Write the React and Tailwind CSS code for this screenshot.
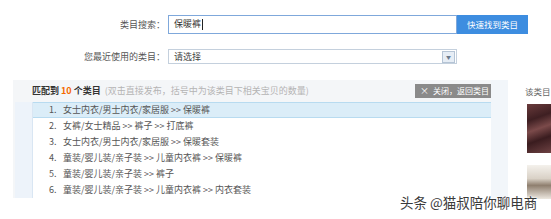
const rows = [
  '女士内衣/男士内衣/家居服 >> 保暖裤',
  '女裤/女士精品 >> 裤子 >> 打底裤',
  '女士内衣/男士内衣/家居服 >> 保暖套装',
  '童装/婴儿装/亲子装 >> 儿童内衣裤 >> 保暖裤',
  '童装/婴儿装/亲子装 >> 裤子',
  '童装/婴儿装/亲子装 >> 儿童内衣裤 >> 内衣套装',
];

const App = () => {
  return (
    <div
      className="relative w-[551px] h-[219px] overflow-hidden bg-white text-[#555]"
      style={{ fontFamily: '"Noto Sans CJK SC", "Noto Sans", sans-serif' }}
    >
      {/* Search form */}
      <div className="pt-[14px]">
        <div className="flex items-center h-[20px]">
          <div className="w-[165px] text-right text-[9px] leading-none text-[#555]">类目搜索：</div>
          <div className="ml-[3px] w-[289px] h-[19px] border border-[#7fa8db] flex items-center px-[5px] text-[9px] text-[#333]">
            保暖裤<span className="ml-[1px] w-px h-[11px] bg-[#222]" />
          </div>
          <button className="w-[71px] h-[19px] bg-[#3d8de0] text-white text-[8.5px] flex items-center justify-center">
            快速找到类目
          </button>
        </div>

        <div className="flex items-center h-[15px] mt-[15px]">
          <div className="w-[165px] text-right text-[9px] leading-none text-[#555]">您最近使用的类目：</div>
          <div className="ml-[3px] w-[289px] h-[15px] border border-[#c4d0dd] flex items-center pl-[5px] text-[9px] text-[#444]">
            <span className="flex-1">请选择</span>
            <span className="w-[13px] h-[12px] mr-px bg-[#e6edf5] border border-[#b5c4d5] flex items-center justify-center text-[5px] text-[#6b7a8c]">
              ▼
            </span>
          </div>
        </div>
      </div>

      {/* Result panel */}
      <div className="flex mt-[16px]">
        <div className="ml-[13px] w-[478px] flex flex-col">
          <div className="h-[22px] bg-[#f4f6f8] flex items-center pl-[19px] text-[9px]">
            <span className="font-bold text-[#333]">匹配到</span>
            <span className="font-bold text-[#f56a00] mx-[2px]">10</span>
            <span className="font-bold text-[#333]">个类目</span>
            <span className="ml-[4px] text-[#b4b4b4]">(双击直接发布，括号中为该类目下相关宝贝的数量)</span>
            <span className="ml-auto h-[14px] w-[76px] bg-[#8a8a8a] text-white text-[8px] flex items-center pl-[5px] gap-[4px]">
              <span className="text-[9px]">×</span>
              <span>关闭，返回类目</span>
            </span>
          </div>
          <div className="flex">
            <div className="w-[19px] bg-[#edf3fa] border-l-[2px] border-[#f4f6f8]" />
            <div className="flex-1 border-l border-[#d9e6f3] text-[9px] text-[#555]">
              {rows.map((r, i) => (
                <div
                  key={i}
                  className={`h-[16px] flex items-center pl-[16px] ${
                    i === 0 ? 'bg-[#dbedf8] border-y border-[#b8dbf0]' : ''
                  }`}
                >
                  <span className="w-[14px]">{i + 1}.</span>
                  <span>{r}</span>
                </div>
              ))}
            </div>
          </div>
        </div>

        <div className="w-[17px] h-[120px] bg-[#f2f6fa]" />

        <div className="flex-1 bg-white">
          <div className="h-[22px] flex items-center pl-[17px] text-[8.5px] text-[#666]">该类目</div>
          <div className="ml-[19px] mt-[2px] h-[49px] bg-[linear-gradient(160deg,#6a3b3c_0%,#3e1f22_30%,#7b4a4a_50%,#3a1c1f_70%,#6e4243_100%)]" />
          <div className="ml-[19px] mt-[12px] h-[34px] bg-[linear-gradient(180deg,#f4f1ec_0%,#d9d1c6_40%,#8f7f6f_60%,#ece7df_100%)]" />
        </div>
      </div>

      {/* Watermark */}
      <div
        className="absolute left-[400px] top-[196px] text-[13.5px] leading-none text-[#3a3a3a] whitespace-nowrap"
        style={{ textShadow: '0 0 2px #fff, 0 0 2px #fff' }}
      >
        头条 @猫叔陪你聊电商
      </div>
    </div>
  );
};

export default App;
